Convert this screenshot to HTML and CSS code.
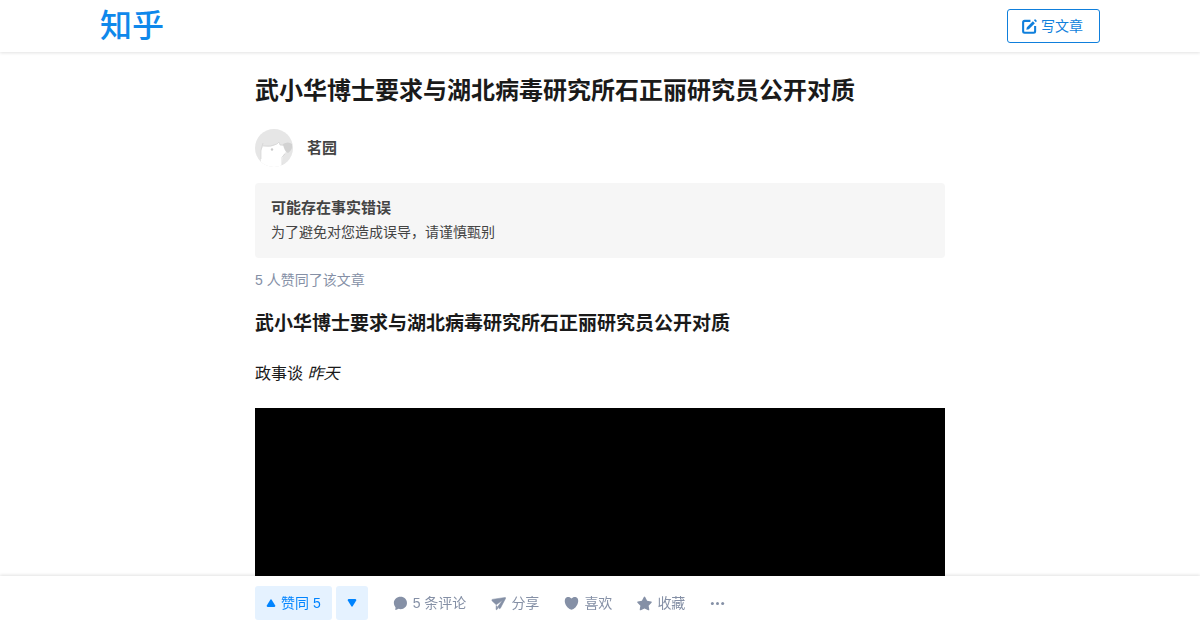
FILE: index.html
```html
<!DOCTYPE html>
<html lang="zh-CN">
<head>
<meta charset="utf-8">
<meta name="viewport" content="width=device-width, initial-scale=1">
<title>武小华博士要求与湖北病毒研究所石正丽研究员公开对质 - 知乎</title>
<link rel="stylesheet" href="styles.css">
</head>
<body>
<header class="topbar">
  <div class="topbar-inner">
    <a class="logo" href="#">知乎</a>
    <button class="write" type="button">
      <svg class="write-icon" viewBox="0 0 16 16" aria-hidden="true">
        <path d="M9 2H2.800Q1.200 2 1.200 3.600V13Q1.200 14.600 2.800 14.600H12.400Q14 14.600 14 13V7.400" fill="none" stroke="currentColor" stroke-width="2.200"/>
        <path d="M11.600 2.400 13.700 4.500 7.300 10.900 4.600 11.500 5.200 8.800ZM13.400.6Q13.900.1 14.500.6L15.500 1.600Q16 2.200 15.500 2.700L14.800 3.400 12.700 1.300Z" fill="currentColor"/>
      </svg>
      <span>写文章</span>
    </button>
  </div>
</header>
<main class="article">
  <h1 class="title">武小华博士要求与湖北病毒研究所石正丽研究员公开对质</h1>
  <div class="author">
    <svg class="avatar" viewBox="0 0 38 38" aria-hidden="true">
      <defs><clipPath id="face"><circle cx="19" cy="19" r="19"/></clipPath></defs>
      <g clip-path="url(#face)">
        <path d="M0 0H38V38H0Z" fill="#e6e6e6"/>
        <path d="M6 38V22L8 17Q17 19 22 15L24 13 25 16 29 17 31 23 28 26 27 38Z" fill="#fff"/>
        <path d="M8 17Q16 18 22 15L24 13 25 16 29 16M6 30V21L8 14M27 36V28L30 25" fill="none" stroke="#d2d2d2" stroke-width=".7"/>
        <path d="M28 15Q33 12 37 15Q38 21 33 24Q29 22 28 15Z" fill="#d2d2d2"/>
        <circle cx="17" cy="20.500" r="1.200" fill="#cbcbcb"/>
      </g>
    </svg>
    <a class="author-name" href="#">茗园</a>
  </div>
  <aside class="notice">
    <strong class="notice-title">可能存在事实错误</strong>
    <p class="notice-text">为了避免对您造成误导，请谨慎甄别</p>
  </aside>
  <p class="voters">5 人赞同了该文章</p>
  <h2 class="subtitle">武小华博士要求与湖北病毒研究所石正丽研究员公开对质</h2>
  <p class="byline">政事谈 <em>昨天</em></p>
  <div class="video"></div>
</main>
<footer class="actions">
  <div class="actions-inner">
    <div class="votes">
      <button class="vote" type="button">
        <svg class="arrow" viewBox="0 0 10 10" aria-hidden="true"><path d="M4.300 1.700Q5 .8 5.700 1.700L9.200 7.500Q9.600 8.900 8.400 9H1.600Q.4 8.900.8 7.500Z" fill="currentColor"/></svg>
        <span>赞同 5</span>
      </button>
      <button class="vote" type="button" aria-label="反对">
        <svg class="arrow" viewBox="0 0 10 10" aria-hidden="true"><path d="M4.300 8.300Q5 9.200 5.700 8.300L9.200 2.500Q9.600 1.100 8.400 1H1.600Q.4 1.100.8 2.500Z" fill="currentColor"/></svg>
      </button>
    </div>
    <button class="action" type="button">
      <svg class="icon" viewBox="0 0 16 16" aria-hidden="true"><path d="M8 .9C12 .9 14.900 3.800 14.900 7.400S12 14 8.200 14Q7 14 6 13.700L3 14.800Q2.300 15 2.500 14.200L2.700 12.200Q.9 10.300.9 7.400C.9 3.800 4.200.9 8 .9Z" fill="currentColor"/></svg>
      <span>5 条评论</span>
    </button>
    <button class="action" type="button">
      <svg class="icon" viewBox="0 0 16 16" aria-hidden="true"><path d="M1.400 3.600 15 1.600Q16 1.600 15.500 2.600L10 13Q9.300 13.900 8.600 13.100L7.300 11.300 12.300 4.400 5.600 9.300 1.200 5.200Q.3 4 1.400 3.600ZM5.600 10.200 7.700 12.800 6.300 14.500Q5.400 15.100 5.400 13.900Z" fill="currentColor" stroke="currentColor" stroke-width=".6"/></svg>
      <span>分享</span>
    </button>
    <button class="action" type="button">
      <svg class="icon" viewBox="0 0 16 16" aria-hidden="true"><path d="M8 2.700C9.800.4 12.900.5 14.400 2.500C16 5 15 9.200 12.400 12Q10 14.600 8 14.600T3.600 12C1 9.200 0 5 1.600 2.500C3.100.5 6.200.4 8 2.700Z" fill="currentColor"/></svg>
      <span>喜欢</span>
    </button>
    <button class="action" type="button">
      <svg class="icon" viewBox="0 0 16 16" aria-hidden="true"><path d="M7.300 1Q8-.1 8.700 1L10.800 5.100 15.100 5.800Q16.300 6.200 15.500 7.200L12.400 10.400 13.100 14.400Q13.100 15.600 12 15.200L8 13.200 4 15.200Q2.900 15.600 2.900 14.400L3.600 10.400.5 7.200Q-.3 6.200.9 5.800L5.200 5.100Z" fill="currentColor"/></svg>
      <span>收藏</span>
    </button>
    <button class="action" type="button" aria-label="更多">
      <svg class="icon" viewBox="0 0 16 16" aria-hidden="true"><g fill="currentColor"><circle cx="2.500" cy="8" r="1.600"/><circle cx="8" cy="8" r="1.600"/><circle cx="13.500" cy="8" r="1.600"/></g></svg>
    </button>
  </div>
</footer>
</body>
</html>
```

FILE: styles.css
```css
* { box-sizing: border-box; }
body {
  margin: 0;
  background: #fff;
  color: #1a1a1a;
  font-family: "Liberation Sans", "Noto Sans CJK SC", sans-serif;
  font-size: 14px;
  line-height: 24px;
}
h1, h2, p { margin: 0; }
button {
  border: 0;
  padding: 0;
  background: none;
  font: inherit;
  cursor: pointer;
}
a { color: inherit; text-decoration: none; }

.topbar {
  position: sticky;
  top: 0;
  z-index: 1;
  background: #fff;
  box-shadow: 0 1px 3px rgba(18, 18, 18, 0.12);
}
.topbar-inner {
  display: flex;
  align-items: center;
  justify-content: space-between;
  max-width: 1000px;
  height: 52px;
  margin: 0 auto;
}
.logo {
  padding-bottom: 6px;
  color: #0f88eb;
  font-family: "Noto Sans CJK SC", sans-serif;
  font-size: 32px;
  font-weight: 500;
  line-height: 46px;
}
.write {
  display: flex;
  align-items: center;
  gap: 4px;
  height: 34px;
  padding: 0 16px 0 14px;
  border: 1px solid #0f7fdc;
  border-radius: 3px;
  color: #0f7fdc;
}
.write-icon { width: 15px; height: 15px; }

.article {
  max-width: 690px;
  height: calc(100vh - 52px);
  margin: 0 auto;
  overflow: hidden;
}
.title {
  margin: 21px 0 20px;
  font-size: 24px;
  line-height: 36px;
}
.author {
  display: flex;
  align-items: center;
  gap: 14px;
  margin-bottom: 16px;
}
.avatar { width: 38px; height: 38px; }
.author-name {
  color: #444;
  font-size: 15px;
  font-weight: 700;
}
.notice {
  padding: 13px 16px 14px;
  border-radius: 4px;
  background: #f6f6f6;
  color: #444;
}
.notice-title {
  display: block;
  font-size: 15px;
}
.voters {
  margin-top: 10px;
  color: #8590a6;
}
.subtitle {
  margin-top: 16px;
  font-size: 19px;
  line-height: 32px;
}
.byline {
  margin: 20px 0;
  font-size: 16px;
  line-height: 28px;
}
.video {
  width: 100%;
  aspect-ratio: 16 / 9;
  background: #000;
}

.actions {
  position: fixed;
  right: 0;
  bottom: 0;
  left: 0;
  background: #fff;
  box-shadow: 0 -1px 3px rgba(18, 18, 18, 0.12);
}
.actions-inner {
  display: flex;
  align-items: center;
  gap: 25px;
  max-width: 690px;
  margin: 0 auto;
  padding: 10px 0;
}
.votes { display: flex; gap: 4px; }
.vote {
  display: flex;
  align-items: center;
  gap: 5px;
  height: 34px;
  padding: 0 11px;
  border-radius: 3px;
  background: #e5f2ff;
  color: #0084ff;
}
.arrow { width: 10px; height: 10px; }
.action {
  display: flex;
  align-items: center;
  gap: 5px;
  color: #8590a6;
}
.icon { width: 15px; height: 15px; }
```
